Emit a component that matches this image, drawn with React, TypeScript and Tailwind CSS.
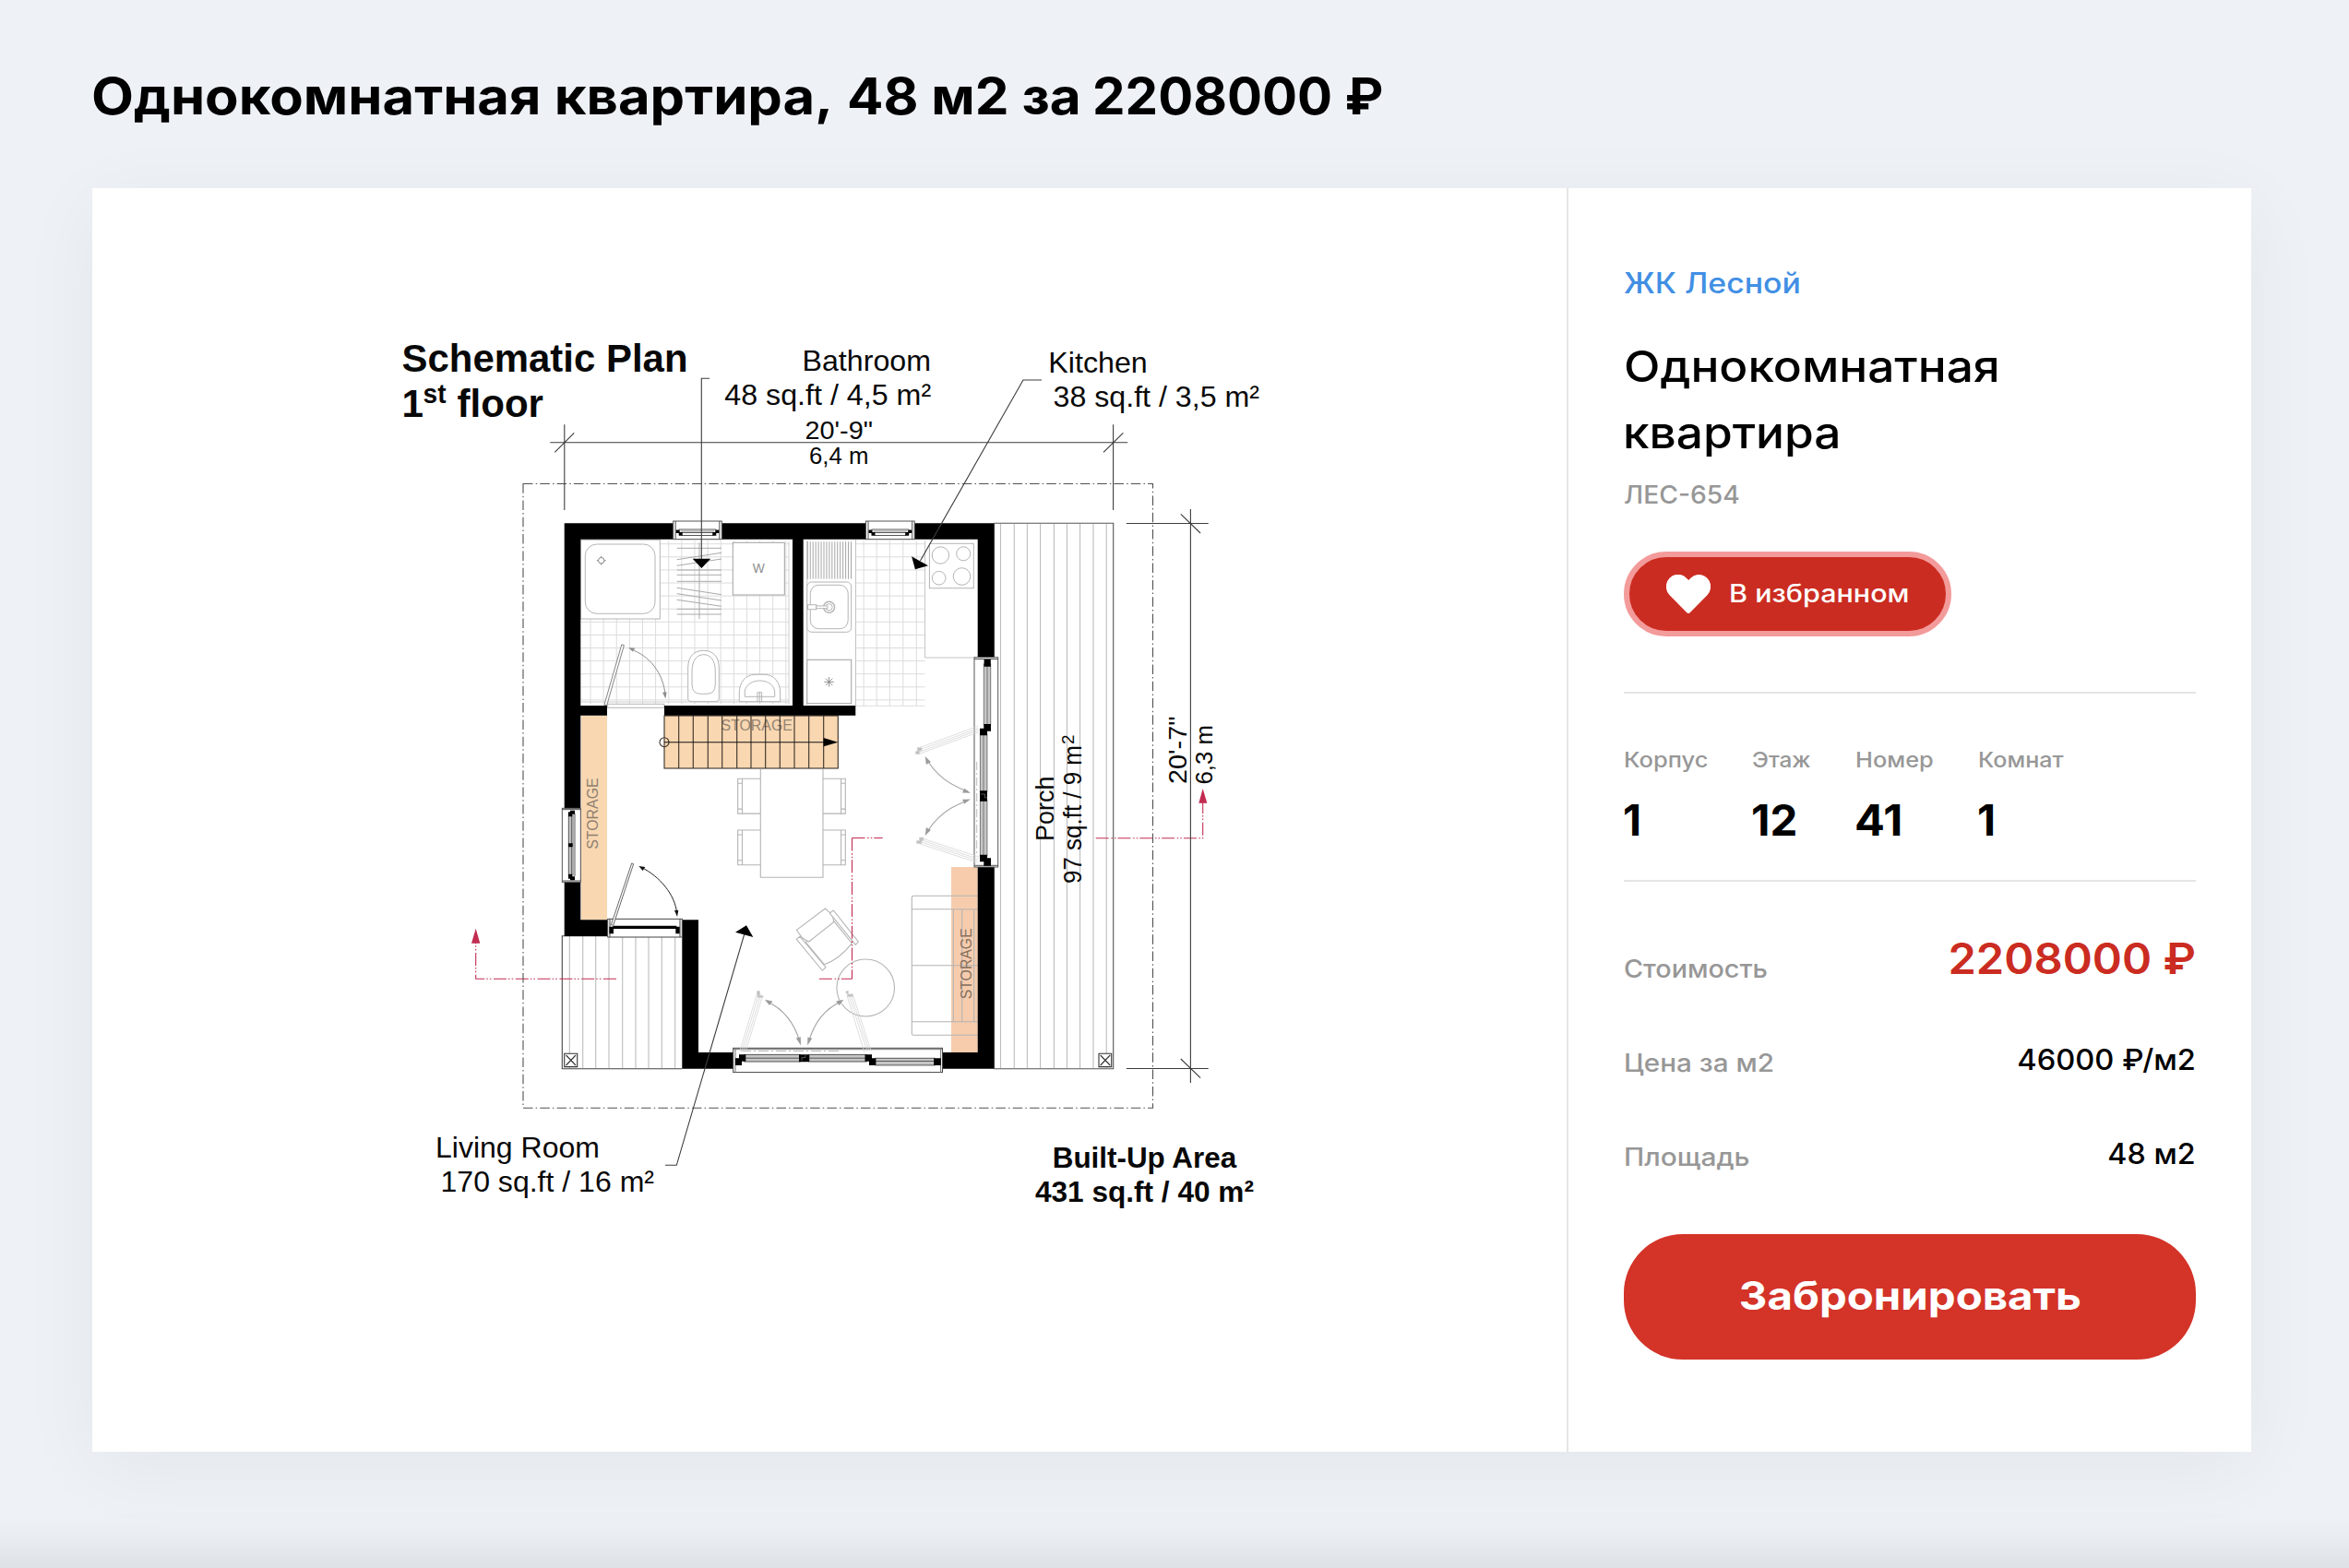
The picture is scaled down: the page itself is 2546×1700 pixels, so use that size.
import type { ReactNode } from 'react';

const INK = '#3c3c3c';
const SOFT = '#b4b4b4';
const TILE = '#dcdcdc';
const RED = '#c22c50';

type LabelProps = {
  x: number;
  y: number;
  w: number;
  size: number;
  bold?: boolean;
  vertical?: boolean;
  fill?: string;
  children: string;
};

/** A plan caption: x/y is the start of the baseline, w the drawn length. */
function Label({ x, y, w, size, bold, vertical, fill = '#080808', children }: LabelProps) {
  return (
    <text
      transform={vertical ? `translate(${x} ${y}) rotate(-90)` : `translate(${x} ${y})`}
      fontSize={size}
      fontWeight={bold ? 700 : 400}
      textLength={w}
      lengthAdjust="spacingAndGlyphs"
      fill={fill}
      stroke="none"
    >
      {children}
    </text>
  );
}

/** Parallel strokes at the given offsets. */
function Rules({ at, from, to, dir, ...rest }: { at: number[]; from: number; to: number; dir: 'v' | 'h'; stroke?: string; strokeWidth?: number }) {
  const d = at.map((p) => (dir === 'v' ? `M${p} ${from}V${to}` : `M${from} ${p}H${to}`)).join('');
  return <path d={d} {...rest} />;
}

const range = (start: number, step: number, n: number) => Array.from({ length: n }, (_, i) => start + i * step);
const tileRows = range(589.7, 14.1, 13);

function Walls() {
  return (
    <path
      stroke="none"
      fill="#000"
      d="M611.7 567.3H1077.3V713H1059.7V584.7H870.7V765H927.3V775.7H720V765H859V584.7H629.3V765H658V775.7H629.3V997.3H658.7V1015H611.7Z
         M739.3 997.3H757V1141H795V1158.7H739.3Z
         M1059.7 940H1077.3V1158.7H1021.5V1141H1059.7Z"
    />
  );
}

function SmallWindow({ x, w }: { x: number; w: number }) {
  return (
    <g transform={`translate(${x} 565)`} stroke="#555" strokeWidth="1">
      <rect width={w} height="19.7" fill="#fff" />
      <path d={`M2.5 0V19.7M${w - 2.5} 0V19.7M6 9H${w - 6}M8 12.5H${w - 8}M9 15.5H${w - 9}`} />
      <path d={`M8 10.7H${w - 8}`} stroke="#bbb" strokeWidth="2" />
      <path d={`M3 9.5H7V12H10V15.8H6V13H3ZM${w - 3} 9.5H${w - 7}V12H${w - 10}V15.8H${w - 6}V13H${w - 3}Z`} fill="#000" stroke="none" />
    </g>
  );
}

function Bathroom() {
  return (
    <g stroke={SOFT} strokeWidth="1">
      <Rules dir="v" at={range(640, 14.12, 16)} from={586} to={764} stroke={TILE} />
      <Rules dir="h" at={tileRows} from={629.3} to={855} stroke={TILE} />
      <path d="M855 587V764M629.3 761H855" stroke="#cfcfcf" />
      <rect x="629.3" y="585.3" width="86" height="85.7" fill="#fff" />
      <rect x="634.3" y="590" width="75.7" height="75.3" rx="12.5" fill="#fff" />
      <circle cx="651.7" cy="607.7" r="3.2" stroke="#888" />
      <path d="M651.7 602.7v2M651.7 610.7v2M646.7 607.7h2M654.7 607.7h2" stroke="#888" />
      <path
        stroke="#a9a9a9"
        d="M758 588.3V671M733.7 594.3H782M733.7 606.7L782 599.3M733.7 613.3L782 606M733.7 618H782M733.7 623.3H782M733.7 630.3H782M733.7 637.3L782 644.7M733.7 643.7L782 651M733.7 650.3L782 657.3M733.7 660.3H782M733.7 666H782"
      />
      <rect x="794.3" y="588.3" width="56" height="56.7" fill="#fff" stroke="#a0a0a0" />
      <Label x={815.8} y={621} w={13} size={14} fill="#8f8f8f">W</Label>
      <path d="M745.7 757V724C745.7 711 753 705.3 762.5 705.3S779.3 711 779.3 724V757Q779.3 760.7 775 760.7H750Q745.7 760.7 745.7 757Z" fill="#fff" />
      <path d="M750 728C750 715 756 709.7 762.7 709.7S775.3 715 775.3 728V742Q775.3 752.3 766 752.3H759.5Q750 752.3 750 742Z" />
      <path d="M801.3 760.7V751C801.3 739 809 731.3 818 731.3H829C838 731.3 845.7 739 845.7 751V760.7Z" fill="#fff" />
      <path d="M807.3 755.3V749C809 741.5 816 738 823.5 738S838 741.5 839.7 749V755.3ZM821 750.7h4.6v10h-4.6ZM823.3 750.7v10" />
      <rect x="658.7" y="763.3" width="61.3" height="4" fill="#fff" />
      <path d="M654.9 764.3L673.8 698.9L676.4 699.6L657.8 764.3Z" fill="#fff" stroke="#666" strokeWidth=".8" />
      <path d="M683 703.5C704 711 719 729 721.3 755" stroke="#8d8d8d" />
      <path d="M681.3 702l7 .8-2.6 3.8ZM721.4 757.5l-3.4-6.8 4.6-.4Z" fill="#8d8d8d" stroke="none" />
    </g>
  );
}

function Kitchen() {
  return (
    <g stroke={SOFT} strokeWidth="1">
      <Rules dir="v" at={[936.1, 950.2, 964.3, 978.8, 993.3]} from={586} to={765.7} stroke={TILE} />
      <Rules dir="h" at={[...tileRows, 765.3]} from={927.5} to={1002.6} stroke={TILE} />
      <path d="M927.5 585V765M874.8 586V764M1002.6 586V713H1059" stroke="#c4c4c4" />
      <Rules dir="v" at={range(875.3, 2.95, 17)} from={587.3} to={627.7} stroke="#a6a6a6" />
      <rect x="874.8" y="631" width="47.9" height="54.3" rx="5" fill="#fff" />
      <rect x="878.3" y="634.3" width="40.9" height="47.4" rx="9" />
      <circle cx="898.6" cy="658.3" r="6" strokeWidth="1.4" />
      <circle cx="898.6" cy="658.3" r="3.6" />
      <rect x="875.5" y="655.7" width="9.3" height="5" fill="#fff" />
      <path d="M884.8 656.9H897V659.7H884.8Z" fill="#fff" />
      <rect x="874.8" y="715.3" width="47.9" height="47.4" fill="#fff" stroke="#a0a0a0" />
      <path d="M898.6 734v10.6M893.3 739.3h10.6M894.9 735.6l7.4 7.4M902.3 735.6l-7.4 7.4" stroke="#888" strokeWidth=".9" />
      <rect x="1007.4" y="589.3" width="47.9" height="48.4" fill="#fff" />
      <circle cx="1019.4" cy="602" r="9.2" />
      <circle cx="1044.2" cy="600.3" r="7.5" />
      <circle cx="1017.7" cy="626.7" r="7.3" />
      <circle cx="1042.5" cy="625" r="9.3" />
    </g>
  );
}

function Decks() {
  return (
    <g stroke="#bdbdbd" strokeWidth="1.1">
      <Rules dir="v" at={[1084.5, 1099.3, 1113.4, 1127.6, 1142.4, 1156.5, 1170.6, 1185, 1199.2]} from={568} to={1158} />
      <Rules dir="v" at={[617.3, 631.7, 645.7, 660, 674.7, 689, 703, 717.3, 731.7]} from={1015} to={1158} />
      <path d="M1077.3 567.3H1206.7V1158.7H1077.3M1077.6 567.3V1158.7" stroke="#555" />
      <path d="M658.7 1014.7H609.3V1158.7H739.3" stroke="#444" />
      <g stroke="#333" fill="#fff">
        <path d="M611.7 1142.3h14v14.3h-14ZM613.5 1144l10.5 11M624 1144l-10.5 11" />
        <path d="M1191 1142.3h13.7v14.3H1191ZM1192.7 1144l10.5 11M1203.2 1144l-10.5 11" />
      </g>
    </g>
  );
}

function Stairs() {
  return (
    <g stroke="#3a3028" strokeWidth="1.1">
      <rect x="720" y="776" width="188.3" height="57" fill="#f8d7b1" />
      <Label x={781.4} y={791.7} w={77.5} size={16} fill="#968573">STORAGE</Label>
      <Rules dir="v" at={[735.7, 751.3, 767.3, 782.7, 798.7, 814, 829.7, 845.3, 861, 876.7, 892.7]} from={776} to={833} />
      <circle cx="720" cy="804.7" r="5" fill="none" />
      <path d="M720 804.7H894" stroke="#111" />
      <path d="M892.7 800L908.3 804.7L892.7 809.2Z" fill="#000" stroke="none" />
    </g>
  );
}

function Storage() {
  return (
    <g stroke="none">
      <rect x="630" y="776" width="28" height="221.3" fill="#f8d7b1" />
      <Label x={648.3} y={920.8} w={77.5} size={16.5} vertical fill="#8f7f70">STORAGE</Label>
    </g>
  );
}

function Dining() {
  return (
    <g stroke={SOFT} strokeWidth="1.1">
      <path d="M824.3 833.7V951.3H892V833.7" />
      {[844.3, 900].map((y) => (
        <g key={y}>
          <path d={`M824.3 ${y}H799.7v37.8H824.3M804.5 ${y}v37.8M799.7 ${y + 5}h4.8M799.7 ${y + 32.8}h4.8`} />
          <path d={`M892 ${y}H916.3v37.8H892M911.6 ${y}v37.8M916.3 ${y + 5}h-4.7M916.3 ${y + 32.8}h-4.7`} />
        </g>
      ))}
    </g>
  );
}

function Lounge() {
  return (
    <g stroke={SOFT} strokeWidth="1.1">
      <rect x="1031" y="940" width="28.7" height="201" fill="#f6ccad" stroke="none" />
      <path d="M1059.7 971.3H990q-1.7 0-1.7 1.7v12.7H1059.7M988.3 985.7V1046.7H1059.7M988.3 1046.7V1107.7H1059.7M988.3 1107.7v12.8q0 1.8 1.7 1.8H1059.7M1033.3 985.7V1107.7M1042.7 985.7V1107.7M1055.7 985.7V1107.7" />
      <Label x={1052.8} y={1083.3} w={77} size={16.5} vertical fill="#84705f">STORAGE</Label>
      <ellipse cx="938.2" cy="1071" rx="31.3" ry="31" />
      <g transform="translate(860 740) scale(.33333)" strokeWidth="3.2" fill="#fff">
        <path d="M40 845L100 917Q150 900 190 848L128 772Z" />
        <path d="M10 805L103 735L118 748Q132 762 130 780L50 843L30 832Z" />
        <path d="M118 750L130 741L211 843L202 853Z" />
        <path d="M10 835L21 826L105 926L94 937Z" />
      </g>
    </g>
  );
}

function EntryDoor() {
  return (
    <g transform="translate(480 760) scale(.33333)" stroke="#444" strokeWidth="3">
      <rect x="536" y="709" width="242" height="59" fill="#fff" />
      <path d="M543 709V768M771 709V768" />
      <path d="M541 734H553V731H760V734H770V757H757V741H555V757H541Z" fill="#000" stroke="none" />
      <path d="M547 728L614 528L620 530L554 730Z" fill="#fff" strokeWidth="2.4" />
      <path d="M645 541C705 570 755 630 761 690" stroke="#222" />
      <path d="M637 537L658 540L650 552ZM762 702L753 681L766 680Z" fill="#111" stroke="none" />
    </g>
  );
}

function LeftWindow() {
  return (
    <g transform="translate(480 760) scale(.33333)" stroke="#555" strokeWidth="3">
      <rect x="388" y="349" width="60" height="240" fill="#fff" />
      <rect x="409" y="365" width="9" height="205" fill="#ccc" />
      <path d="M388 353H448M388 585H448M423 370V568M429 365V570" />
      <path d="M414 356H429V368H421V376H408V361H414ZM414 583H429V571H421V563H408V578H414ZM408 463H422V475H408Z" fill="#000" stroke="none" />
    </g>
  );
}

function RightWindow() {
  return (
    <g stroke="#555" strokeWidth="1">
      <rect x="1056" y="712.7" width="25.7" height="227.3" fill="#fff" />
      <path d="M1056 714.5H1081.7M1056 938.3H1081.7" />
      <path d="M1058.7 826V926" stroke="#bbb" strokeDasharray="9 3 2 3" />
      <g fill="#c6c6c6" stroke="#777">
        <rect x="1066.3" y="720" width="7.4" height="66" />
        <rect x="1062.4" y="796" width="7.5" height="62" />
        <rect x="1062.4" y="868" width="7.5" height="60" />
        <path d="M1070 720V786M1066 796V858M1066 868V928" />
      </g>
      <path
        fill="#000"
        stroke="none"
        d="M1066.6 715h7.2v7.7h-7.2ZM1066.3 785h7.7v7.7H1070v4.6h-8v-7.6h4.3ZM1062 857.3h8v11.4h-8ZM1062 926.7h8v3.6h4v8.4h-7.7v-4.4H1062Z"
      />
      <path d="M1063 861h4.5v4H1070" stroke="#777" strokeWidth=".7" />
    </g>
  );
}

function BottomWindow() {
  return (
    <g stroke="#444" strokeWidth="1">
      <rect x="794.7" y="1136.3" width="226.8" height="26.3" fill="#fff" />
      <path d="M797 1136.3V1162.6M1019.6 1136.3V1162.6M794.7 1137.7H1021.5" stroke="#777" />
      <path d="M803 1139.5H909" stroke="#bbb" strokeDasharray="11 3 2 3" />
      <g fill="#c6c6c6" stroke="#555">
        <rect x="807" y="1143.4" width="60" height="7.6" />
        <rect x="877" y="1143.4" width="62" height="7.6" />
        <rect x="949" y="1147.3" width="64" height="7.6" />
        <path d="M807 1147.2H867M877 1147.2H938M949 1150.5H1013" />
      </g>
      <path
        fill="#000"
        stroke="none"
        d="M801 1143.3h7.3v7.4H804v4.3h-7v-7.7h4ZM866 1143.3h11v8h-11ZM937.5 1143.3h7.5v4h4.2v7.7H942v-4.3h-4.5ZM1012.2 1147.3h7.6v7.7h-7.6Z"
      />
      <path d="M869 1150v-3.5h4v-2.5" stroke="#777" strokeWidth=".7" />
    </g>
  );
}

/** Light grey French-door leaves with their swing arcs. */
function FrenchDoors() {
  return (
    <g stroke="#d6d6d6" strokeWidth=".8">
      <path d="M1060 787.3L994 811.5L996 817.5L1061 793.5M1060.5 789.5L995 813.5M1061 791.3L996 815.5" />
      <path d="M994.5 810.5h4.5v3.5h-2.5v3.5h-4v-3h2Z" fill="#c0c0c0" />
      <path d="M1061 929L998 908.5L996 914.5L1060 935.5M1060.5 931.3L997.5 910.5M1060 933.3L997 912.5" />
      <path d="M996.5 908h4.5v3h-2v3.5h-5.5v-3h3Z" fill="#c0c0c0" />
      <path d="M802 1139L820.5 1077.5L826.5 1079.5L808 1141M804 1139.5L822.5 1078M806 1140L824.5 1079" />
      <path d="M820.5 1074.5h3v5h3.5v2h-6v-3h-.5Z" fill="#c0c0c0" />
      <path d="M944 1139L924 1077.5L918 1079.5L937 1141M942 1139.5L922 1078M940 1140L920 1079" />
      <path d="M917 1074.5h2.5v3.5h5v2.5h-6v-3.5h-1.5Z" fill="#c0c0c0" />
      <g stroke="#a3a3a3" strokeWidth="1.1">
        <path d="M1005 824Q1019 848 1049 858M1005 902Q1019 878 1049 868" />
        <path d="M831 1085.5Q858 1098 867 1130M912 1085.5Q885 1098 876.5 1130" />
      </g>
      <g fill="#9c9c9c" stroke="none">
        <path d="M1002.7 820l1.2 9 5-3ZM1052 859.7l-9-.3 2.2-4.6ZM1052 866.5l-9 .3 2.2 4.6ZM1002.7 906l1.2-9 5 3Z" />
        <path d="M829 1083.7l5 6.4 3.4-4.6ZM868 1133.5l-5.2-8 5-1.2ZM914.5 1083.7l-5 6.4-3.4-4.6ZM875.2 1133.5l.2-9 4.8 1.2Z" />
      </g>
    </g>
  );
}

function Dimensions() {
  return (
    <g stroke={INK} strokeWidth="1.1">
      <rect x="567" y="524.5" width="682.5" height="676.8" strokeDasharray="10.5 3.2 1.5 3.1" stroke="#505050" />
      <path d="M596.3 479.8H1222.3M611.8 460.3V553M1206.6 460.3V553M601.3 490.3L622.3 469.3M1196 490.3L1217.4 469.3" />
      <path d="M1290.4 552V1174M1220.9 567.5H1309.7M1220.9 1158.5H1309.7M1279.8 557.3L1301.1 578M1279.8 1148L1301.1 1168.7" />
      <path d="M769 410.3H760.3V606M1129 412H1109L997.5 608M721 1263.3H733.3L807 1012" />
      <path d="M750.7 605.7H770.3L760.4 615.9ZM988.1 603.3L1006 613.3L991.9 617.3ZM797 1010.7L809 1003.3L816.3 1016Z" fill="#000" stroke="none" />
    </g>
  );
}

function SectionMarks() {
  return (
    <g stroke={RED} strokeWidth="1.1" strokeDasharray="14 2.6 1.6 2 1.6 2">
      <path d="M923.5 908.5H956.7M923.5 908.5V1061.3M888 1061.3H923.5" />
      <path d="M1187.7 908.7H1303.7V870" />
      <path d="M668 1061.3H515.7V1022" />
      <path d="M1299.3 870.7L1303.7 855L1308.3 870.7ZM511 1022.7L515.7 1006.7L520.3 1022.7Z" fill={RED} stroke="none" />
    </g>
  );
}

function Captions() {
  return (
    <g>
      <Label x={435.5} y={402.7} w={310} size={42.5} bold>Schematic Plan</Label>
      <Label x={435.5} y={451.7} w={23.5} size={42.5} bold>1</Label>
      <Label x={458.5} y={437.3} w={25} size={29} bold>st</Label>
      <Label x={495.5} y={451.7} w={93.5} size={42.5} bold>floor</Label>
      <Label x={869.5} y={402} w={139.5} size={31.5}>Bathroom</Label>
      <Label x={785.2} y={438.7} w={224} size={31.5}>48 sq.ft / 4,5 m²</Label>
      <Label x={872.5} y={475.7} w={73.5} size={28.5}>20'-9"</Label>
      <Label x={877} y={503} w={64.5} size={25.5}>6,4 m</Label>
      <Label x={1136.3} y={403.7} w={107.5} size={31.5}>Kitchen</Label>
      <Label x={1141.5} y={440.7} w={223.5} size={31.5}>38 sq.ft / 3,5 m²</Label>
      <Label x={472} y={1255} w={178} size={31.5}>Living Room</Label>
      <Label x={477.5} y={1292} w={231.5} size={31.5}>170 sq.ft / 16 m²</Label>
      <Label x={1140.7} y={1266} w={199.5} size={31.5} bold>Built-Up Area</Label>
      <Label x={1121.9} y={1302.7} w={237} size={31.5} bold>431 sq.ft / 40 m²</Label>
      <Label x={1141.7} y={912} w={70.5} size={27} vertical>Porch</Label>
      <Label x={1172} y={958} w={150} size={27} vertical>97 sq.ft / 9 m</Label>
      <Label x={1163.5} y={807} w={10.5} size={18} vertical>2</Label>
      <Label x={1286} y={850} w={73.5} size={28.5} vertical>20'-7"</Label>
      <Label x={1313.7} y={850.5} w={64.5} size={25.5} vertical>6,3 m</Label>
    </g>
  );
}

function FloorPlan() {
  return (
    <svg viewBox="100 204 1598 1370" className="block h-[1370px] w-[1598px] font-['Liberation_Sans',Arial,sans-serif]" fill="none">
      <Decks />
      <Bathroom />
      <Kitchen />
      <Storage />
      <Stairs />
      <Dining />
      <Lounge />
      <Walls />
      <SmallWindow x={729.7} w={52.6} />
      <SmallWindow x={938.5} w={52.7} />
      <LeftWindow />
      <RightWindow />
      <BottomWindow />
      <EntryDoor />
      <FrenchDoors />
      <SectionMarks />
      <Dimensions />
      <Captions />
    </svg>
  );
}

function Heart() {
  return (
    <svg viewBox="0 0 48 42" className="h-[42px] w-[48px] shrink-0" fill="#fff">
      <path d="M22.3 41.2L3.6 22.2A13.2 13.2 0 0 1 3.6 3.7A12.6 12.6 0 0 1 21.9 3.7L24.2 6L26.4 3.7A12.6 12.6 0 0 1 44.4 3.7A13.2 13.2 0 0 1 44.4 22.2L25.7 41.2Q24 42.8 22.3 41.2Z" />
    </svg>
  );
}

function Row({ label, labelClass, children }: { label: string; labelClass: string; children: ReactNode }) {
  return (
    <div className="flex items-end justify-between">
      <span className={`origin-left text-[27px] leading-[42px] font-medium text-[#979797] ${labelClass}`}>{label}</span>
      {children}
    </div>
  );
}

function Fact({ label, labelClass, value, valueClass }: { label: string; labelClass: string; value: string; valueClass: string }) {
  return (
    <div>
      <div className={`w-fit origin-left ${labelClass}`}>{label}</div>
      <div className={`mt-[18px] w-fit origin-left text-[46.5px] leading-[60px] font-bold text-black ${valueClass}`}>{value}</div>
    </div>
  );
}

function Details() {
  return (
    <aside className="flex h-full w-[742px] flex-col items-start border-l-2 border-[#e5e5e5] px-[60px] pt-[79px]">
      <a className="origin-left scale-x-[1.091] text-[31px] leading-[48px] font-medium text-[#418fe4]">ЖК Лесной</a>
      <h2 className="mt-[30px] origin-left scale-x-[1.106] text-[46.5px] leading-[72px] font-medium">
        Однокомнатная
        <br />
        <span className="-ml-px">квартира</span>
      </h2>
      <div className="mt-[11px] origin-left scale-x-[1.046] text-[27px] leading-[42px] font-medium text-[#979797]">ЛЕС-654</div>

      <button className="mt-[40px] flex h-[92px] w-[355px] items-center gap-[20px] rounded-full border-[6px] border-[#f39b9b] bg-[#cb2c21] pl-[40px] text-white">
        <Heart />
        <span className="origin-left scale-x-[1.129] pb-[1px] text-[27px] leading-[42px] font-medium whitespace-nowrap">В избранном</span>
      </button>

      <div className="mt-[60px] grid w-full grid-cols-[139px_111px_134px_auto] border-y-2 border-[#e5e5e5] pt-[55px] pb-[35px] text-[23px] leading-[34px] font-medium text-[#979797]">
        <Fact label="Корпус" labelClass="scale-x-[1.108]" value="1" valueClass="-ml-[1px]" />
        <Fact label="Этаж" labelClass="scale-x-[1.061]" value="12" valueClass="-ml-[1px] scale-x-[1.02]" />
        <Fact label="Номер" labelClass="ml-px scale-x-[1.104]" value="41" valueClass="scale-x-[1.05]" />
        <Fact label="Комнат" labelClass="scale-x-[1.093]" value="1" valueClass="-ml-[1px]" />
      </div>

      <div className="mt-[47px] w-full">
        <Row label="Стоимость" labelClass="mb-[3px] scale-x-[1.064]">
          <span className="origin-right scale-x-[1.049] text-[46.5px] leading-[72px] font-semibold text-[#cb2c21]">2208000 ₽</span>
        </Row>
      </div>
      <div className="mt-[50px] w-full">
        <Row label="Цена за м2" labelClass="scale-x-[1.098]">
          <span className="mb-px origin-right scale-x-[1.053] text-[31px] leading-[48px] font-medium">46000 ₽/м2</span>
        </Row>
      </div>
      <div className="mt-[53px] w-full">
        <Row label="Площадь" labelClass="scale-x-[1.107]">
          <span className="mb-px origin-right scale-x-[1.04] text-[31px] leading-[48px] font-medium">48 м2</span>
        </Row>
      </div>

      <button className="mt-[62px] flex h-[136px] w-[620px] items-center justify-center rounded-[64px] bg-[#d43328] pb-[3px] text-[42.5px] font-bold text-white">
        <span className="scale-x-[1.115]">Забронировать</span>
      </button>
    </aside>
  );
}

export default function App() {
  return (
    <div className="flex h-[1700px] w-[2546px] flex-col overflow-hidden bg-[#eef1f6] font-['Inter',sans-serif] text-black">
      <h1 className="mt-[70px] ml-[99px] flex text-[54.5px] leading-[68px] font-bold whitespace-nowrap">
        <span className="w-[819px]">
          <span className="inline-block origin-left scale-x-[1.096]">Однокомнатная квартира,</span>
        </span>
        <span className="w-[266px]">
          <span className="inline-block origin-left scale-x-[1.072]">48 м2 за</span>
        </span>
        <span className="inline-block origin-left scale-x-[1.036]">2208000 ₽</span>
      </h1>
      <main className="mt-[66px] ml-[100px] flex h-[1370px] w-[2340px] shrink-0 bg-white shadow-[0_16px_80px_rgba(0,50,20,0.05)]">
        <FloorPlan />
        <Details />
      </main>
      <footer className="-mx-[100px] mt-[126px] h-[200px] shrink-0 bg-white shadow-[0_0_66px_rgba(0,20,10,0.14)]" />
    </div>
  );
}
